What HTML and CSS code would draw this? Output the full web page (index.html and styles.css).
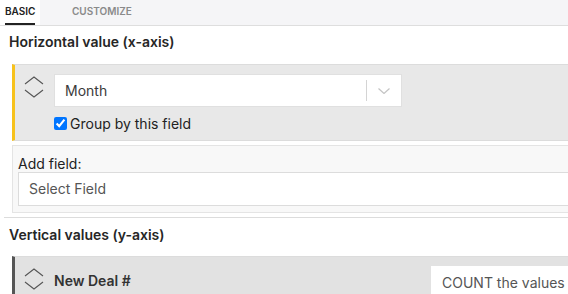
FILE: index.html
```html
<!DOCTYPE html>
<html lang="en">
  <head>
    <meta http-equiv="Content-Type" content="text/html;charset=utf-8" />
    <meta name="viewport" content="width=device-width, initial-scale=1.0" />
    <title>chart settings</title>
    <link rel="stylesheet" href="styles.css">
  </head>
  <body>
    <nav class="nav--tabs">
      <span class="nav__tab nav__tab--active"><span class="nav__label">BASIC</span></span>
      <span class="nav__tab">CUSTOMIZE</span>
    </nav>

    <h2 class="h2--section">Horizontal value (x-axis)</h2>
    <div class="div--panel div--panel-x">
      <svg class="svg--handle" viewBox="0 0 20 22" aria-hidden="true">
        <polyline points="1,8 10,1 19,8" />
        <polyline points="1,14 10,21 19,14" />
      </svg>
      <div class="div--select">
        <span class="div__value">Month</span>
        <span class="div__separator"></span>
        <svg class="svg--caret" viewBox="0 0 12 6" aria-hidden="true">
          <polyline points="0.5,0.5 6,5.5 11.5,0.5" />
        </svg>
      </div>
      <label class="label--check">
        <input type="checkbox" checked />
        Group by this field
      </label>
    </div>

    <div class="div--add">
      <div class="div__caption">Add field:</div>
      <div class="div--input">Select Field</div>
    </div>

    <hr class="hr--divider" />

    <h2 class="h2--section h2--second">Vertical values (y-axis)</h2>
    <div class="div--panel div--panel-y">
      <svg class="svg--handle" viewBox="0 0 20 22" aria-hidden="true">
        <polyline points="1,8 10,1 19,8" />
        <polyline points="1,14 10,21 19,14" />
      </svg>
      <span class="span--field">New Deal #</span>
      <div class="div--aggregate">COUNT the values</div>
    </div>
  </body>
</html>
```

FILE: styles.css
```css
body {
  font-family: Inter, "Noto Sans", sans-serif;
  margin: 0;
  color: #262626;
  font-size: 14px;
  line-height: 16px;
  overflow: hidden;
  background-color: #fff;
}
.nav--tabs {
  display: flex;
  height: 25px;
  background-color: #f5f5f7;
  border-bottom: 1px solid #dedede;
}
.nav__tab {
  font-size: 10px;
  font-weight: 600;
  color: #8a8a8a;
  line-height: 23px;
  padding-left: 32px;
}
.nav__tab--active {
  width: 40px;
  padding: 0;
  background-color: #fff;
  color: #222;
  text-align: center;
}
.nav__label {
  display: inline-block;
  border-bottom: 2px solid #222;
  width: 30px;
}
.h2--section {
  font-size: 14px;
  font-weight: 600;
  line-height: 16px;
  margin: 8px 0 14px 9px;
}
.h2--second {
  margin: 9px 0 13px 9px;
}
.div--panel {
  margin-left: 12px;
  background-color: #e8e8e8;
  border-top: 1px solid #dcdcdc;
  border-bottom: 1px solid #dcdcdc;
}
.div--panel-x {
  display: grid;
  grid-template-columns: 20px 348px;
  column-gap: 10px;
  row-gap: 10px;
  padding: 9px 0 10px 9px;
  border-left: 3px solid #f7c21c;
}
.div--panel-y {
  display: flex;
  align-items: flex-start;
  padding: 9px 0 0 9px;
  height: 40px;
  background-color: #e2e2e2;
  border-left: 3px solid #555;
  border-bottom: 0;
}
.svg--handle {
  width: 20px;
  height: 22px;
  margin-top: 2px;
  fill: none;
  stroke: #555;
  stroke-width: 1.1;
}
.div--select {
  display: flex;
  align-items: center;
  height: 31px;
  background-color: #fff;
  border: 1px solid #e0e0e0;
}
.div__value {
  flex: 1;
  padding-left: 10px;
  color: #3a3a3a;
}
.div__separator {
  width: 1px;
  height: 21px;
  background-color: #d4d4d4;
}
.svg--caret {
  width: 12px;
  height: 6px;
  margin: 0 11px 0 11px;
  fill: none;
  stroke: #c4c4c4;
  stroke-width: 1.2;
}
.label--check {
  grid-column: 2;
  display: flex;
  align-items: center;
  gap: 3px;
  height: 13px;
  color: #222;
}
.label--check input {
  margin: 0;
  width: 13px;
  height: 13px;
}
.div--add {
  margin: 4px 0 0 12px;
  padding: 10px 0 6px 5px;
  background-color: #f8f8f8;
  border: 1px solid #e4e4e4;
  border-right: 0;
}
.div__caption {
  color: #222;
}
.div--input {
  height: 32px;
  line-height: 32px;
  padding-left: 10px;
  background-color: #fff;
  border: 1px solid #dcdcdc;
  border-right: 0;
  color: #555;
}
.hr--divider {
  margin: 4px 0 0 4px;
  border: 0;
  border-top: 1px solid #dcdcdc;
}
.span--field {
  width: 377px;
  margin-left: 10px;
  margin-top: 7px;
  font-weight: 600;
  color: #333;
}
.div--aggregate {
  flex: 1;
  height: 34px;
  line-height: 34px;
  padding-left: 11px;
  background-color: #fff;
  color: #555;
  white-space: nowrap;
}
```
